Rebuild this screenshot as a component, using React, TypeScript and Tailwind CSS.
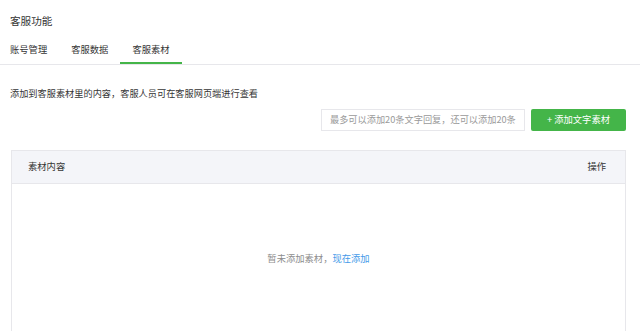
const font = { fontFamily: '"Noto Sans CJK SC", "Noto Sans", sans-serif' };

const tabs = ['账号管理', '客服数据', '客服素材'];

export default function App() {
  const active = 2;
  return (
    <div className="min-h-[331px] w-[640px] overflow-hidden bg-white text-[#353535]" style={font}>
      {/* 标题 */}
      <div className="pl-[10px] pt-[14px] text-[10.6px] leading-[14px]">客服功能</div>

      {/* 标签栏 */}
      <div className="mt-[7px] flex border-b border-[#e7e7eb]">
        <div className="-ml-[2px] flex">
          {tabs.map((t, i) => (
            <div
              key={t}
              className={
                'box-border h-[29px] px-[12px] pt-[8px] text-[9.3px] leading-[12px] ' +
                (i === active ? 'border-b-2 border-[#44b549]' : '')
              }
            >
              {t}
            </div>
          ))}
        </div>
      </div>

      <div className="pl-[10px] pr-[14px]">
        <p className="mt-[22px] text-[9.2px] leading-[12px]">
          添加到客服素材里的内容，客服人员可在客服网页端进行查看
        </p>

        {/* 工具栏 */}
        <div className="mt-[10px] flex justify-end gap-[6px]">
          <div className="flex h-[22px] w-[204px] items-center overflow-hidden whitespace-nowrap border border-[#e7e7eb] pl-[8px] text-[9.2px] text-[#9a9a9a]">
            最多可以添加20条文字回复，还可以添加20条
          </div>
          <button className="flex h-[22px] w-[95px] items-center justify-center rounded-[2px] bg-[#44b549] text-[9.3px] text-white">
            + 添加文字素材
          </button>
        </div>

        {/* 表格 */}
        <div className="ml-px mt-[19px] border border-[#e7e7eb]">
          <div className="flex h-[33px] items-center justify-between border-b border-[#e7e7eb] bg-[#f4f5f9] pl-[16px] pr-[19px] text-[9.3px]">
            <span>素材内容</span>
            <span>操作</span>
          </div>
          <div className="h-[200px] pt-[67px] text-center text-[9.3px] leading-[14px] text-[#8d8d8d]">
            暂未添加素材，<span className="text-[#459ae9]">现在添加</span>
          </div>
        </div>
      </div>
    </div>
  );
}
